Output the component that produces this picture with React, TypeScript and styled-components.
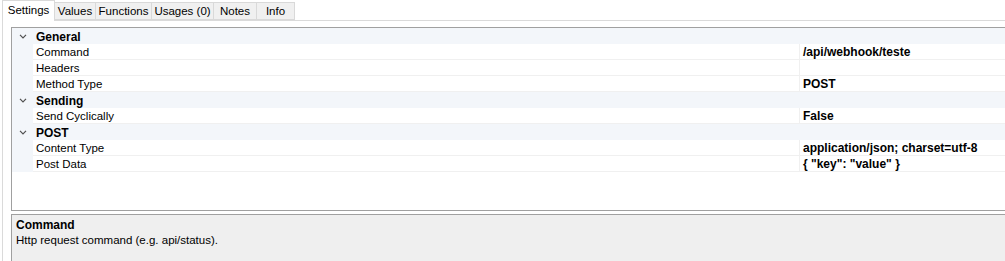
import React from "react";
import styled, { createGlobalStyle } from "styled-components";

const GlobalStyle = createGlobalStyle`
  html, body {
    margin: 0;
    padding: 0;
    background: #ffffff;
    font-family: "Liberation Sans", Arial, sans-serif;
    font-size: 11.5px;
    color: #000;
  }
`;

interface Row {
  label: string;
  value?: string;
  category?: boolean;
}

const tabs = [
  { name: "Settings", width: 53 },
  { name: "Values", width: 42 },
  { name: "Functions", width: 57 },
  { name: "Usages (0)", width: 63 },
  { name: "Notes", width: 44 },
  { name: "Info", width: 39 },
];

const rows: Row[] = [
  { label: "General", category: true },
  { label: "Command", value: "/api/webhook/teste" },
  { label: "Headers", value: "" },
  { label: "Method Type", value: "POST" },
  { label: "Sending", category: true },
  { label: "Send Cyclically", value: "False" },
  { label: "POST", category: true },
  { label: "Content Type", value: "application/json; charset=utf-8" },
  { label: "Post Data", value: '{ "key": "value" }' },
];

/* layout */
const Window = styled.div`
  width: 1005px;
  height: 261px;
  overflow: hidden;
  display: flex;
  flex-direction: column;
`;

const TabStrip = styled.div`
  display: flex;
  align-items: flex-end;
  height: 20px;
  padding-left: 2px;
`;

const Tab = styled.div<{ $active?: boolean; $w: number }>`
  width: ${(p) => p.$w}px;
  height: ${(p) => (p.$active ? 21 : 18)}px;
  box-sizing: border-box;
  display: flex;
  align-items: center;
  justify-content: center;
  background: ${(p) => (p.$active ? "#ffffff" : "#f0f0f0")};
  border: 1px solid #d9d9d9;
  border-bottom: ${(p) => (p.$active ? "none" : "1px solid #d9d9d9")};
  margin-left: -1px;
  margin-bottom: ${(p) => (p.$active ? -1 : 0)}px;
  position: relative;
  z-index: ${(p) => (p.$active ? 1 : 0)};
  padding-bottom: ${(p) => (p.$active ? 2 : 0)}px;
  white-space: nowrap;
  &:first-child {
    margin-left: 0;
  }
`;

const TabPage = styled.div`
  flex: 1;
  margin-left: 2px;
  border-top: 1px solid #dadada;
  border-left: 1px solid #dadada;
  padding: 6px 0 0 8px;
  display: flex;
  flex-direction: column;
`;

const Grid = styled.div`
  height: 184px;
  box-sizing: border-box;
  border: 1px solid #a0a0a0;
  border-right: none;
  background: #ffffff;
`;

const GridRow = styled.div<{ $category?: boolean }>`
  display: flex;
  height: 16px;
  background: ${(p) => (p.$category ? "#f3f6fa" : "#ffffff")};
`;

const Gutter = styled.div`
  width: 21px;
  flex: none;
  background: #f3f6fa;
  display: flex;
  align-items: center;
  justify-content: center;
  padding-top: 1px;
  box-sizing: border-box;
`;

const CategoryLabel = styled.div`
  font-weight: bold;
  font-size: 12px;
  line-height: 16px;
  padding: 1px 0 0 3px;
`;

const NameCell = styled.div`
  width: 767px;
  flex: none;
  box-sizing: border-box;
  border-right: 1px solid #f0f0f0;
  border-bottom: 1px solid #f0f0f0;
  padding: 2px 0 0 3px;
  line-height: 13px;
`;

const ValueCell = styled.div`
  flex: 1;
  box-sizing: border-box;
  border-bottom: 1px solid #f0f0f0;
  padding: 2px 0 0 3px;
  font-weight: bold;
  font-size: 12px;
  line-height: 13px;
  white-space: nowrap;
`;

const Description = styled.div`
  margin-top: 3px;
  flex: 1;
  border-top: 1px solid #a0a0a0;
  border-left: 1px solid #a0a0a0;
  background: #efefef;
  padding: 2px 0 0 4px;
`;

const DescTitle = styled.div`
  font-weight: bold;
  font-size: 12px;
  line-height: 16px;
`;

const DescText = styled.div`
  line-height: 15px;
`;

const Chevron = () => (
  <svg width="8" height="5" viewBox="0 0 8 5">
    <path d="M1 0.8 L4 3.8 L7 0.8" fill="none" stroke="#505050" strokeWidth="1.2" />
  </svg>
);

const App: React.FC = () => {
  return (
    <Window>
      <GlobalStyle />
      <TabStrip>
        {tabs.map((t, i) => (
          <Tab key={t.name} $w={t.width} $active={i === 0}>
            {t.name}
          </Tab>
        ))}
      </TabStrip>
      <TabPage>
        <Grid>
          {rows.map((r) =>
            r.category ? (
              <GridRow key={r.label} $category>
                <Gutter>
                  <Chevron />
                </Gutter>
                <CategoryLabel>{r.label}</CategoryLabel>
              </GridRow>
            ) : (
              <GridRow key={r.label}>
                <Gutter />
                <NameCell>{r.label}</NameCell>
                <ValueCell>{r.value}</ValueCell>
              </GridRow>
            )
          )}
        </Grid>
        <Description>
          <DescTitle>Command</DescTitle>
          <DescText>Http request command (e.g. api/status).</DescText>
        </Description>
      </TabPage>
    </Window>
  );
};

export default App;
